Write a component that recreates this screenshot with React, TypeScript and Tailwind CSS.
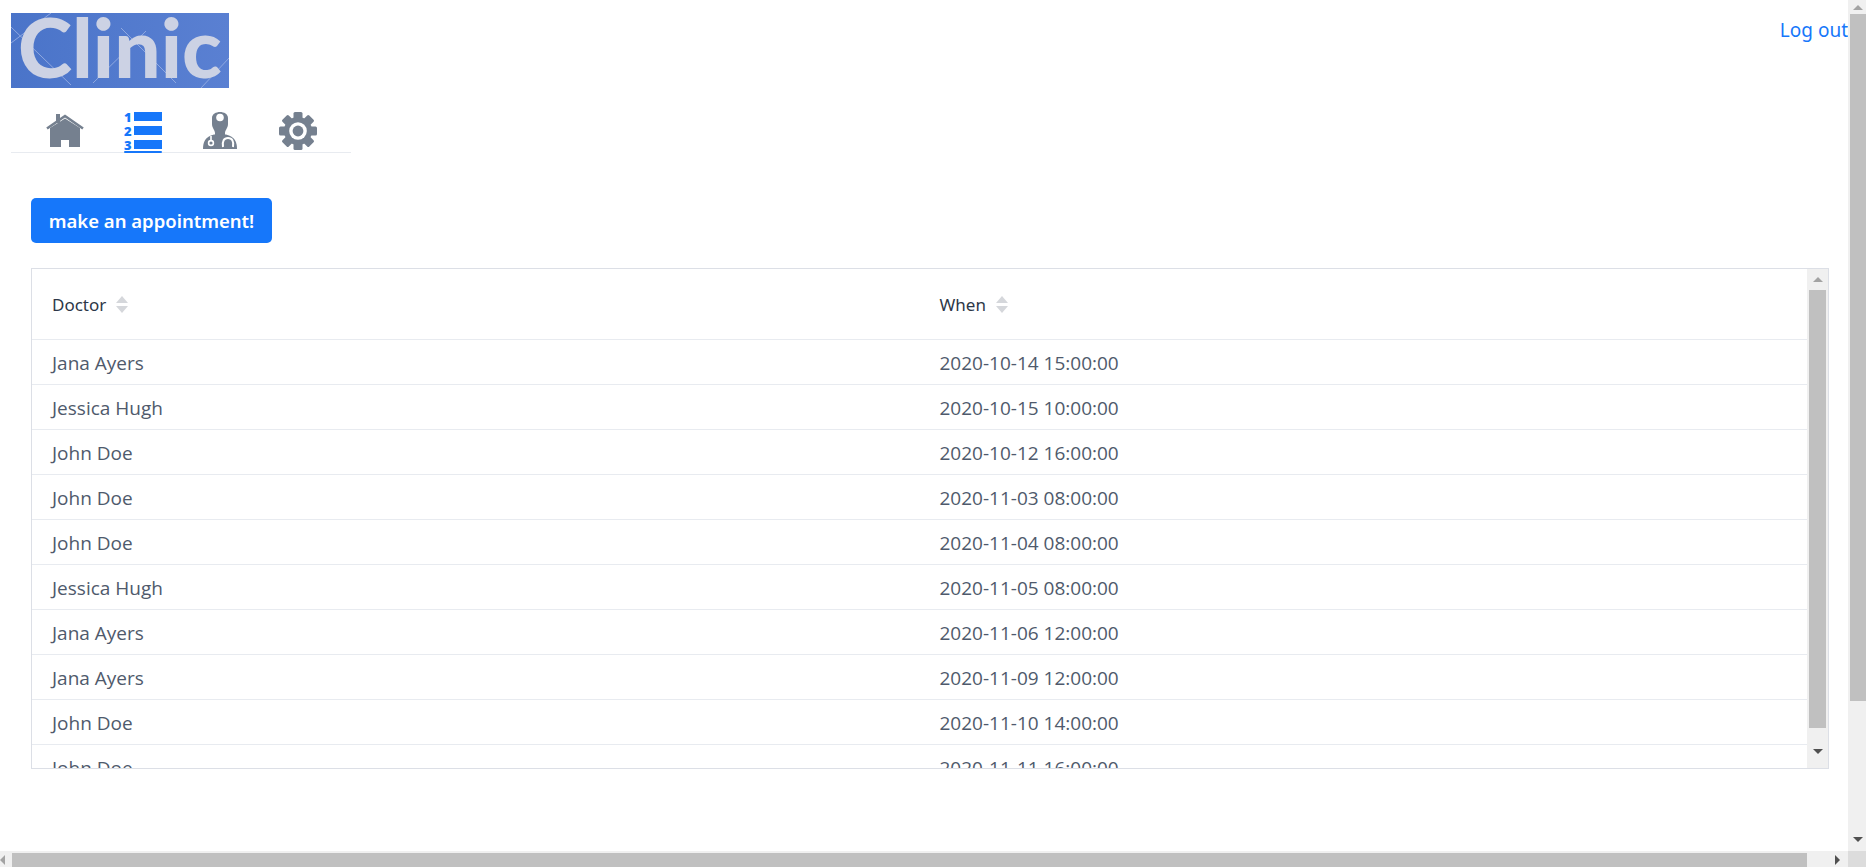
import React from 'react';

const appointments = [
  { doctor: 'Jana Ayers', when: '2020-10-14 15:00:00' },
  { doctor: 'Jessica Hugh', when: '2020-10-15 10:00:00' },
  { doctor: 'John Doe', when: '2020-10-12 16:00:00' },
  { doctor: 'John Doe', when: '2020-11-03 08:00:00' },
  { doctor: 'John Doe', when: '2020-11-04 08:00:00' },
  { doctor: 'Jessica Hugh', when: '2020-11-05 08:00:00' },
  { doctor: 'Jana Ayers', when: '2020-11-06 12:00:00' },
  { doctor: 'Jana Ayers', when: '2020-11-09 12:00:00' },
  { doctor: 'John Doe', when: '2020-11-10 14:00:00' },
  { doctor: 'John Doe', when: '2020-11-11 16:00:00' },
];

function Arrow({ dir, color }: { dir: 'up' | 'down' | 'left' | 'right'; color: string }) {
  const points = {
    up: '0,5 5,0 10,5',
    down: '0,0 10,0 5,5',
    left: '5,0 5,10 0,5',
    right: '0,0 5,5 0,10',
  }[dir];
  const vertical = dir === 'up' || dir === 'down';
  return (
    <svg width={vertical ? 10 : 5} height={vertical ? 5 : 10} viewBox={vertical ? '0 0 10 5' : '0 0 5 10'}>
      <polygon points={points} fill={color} />
    </svg>
  );
}

function HomeIcon() {
  return (
    <svg width="38" height="38" viewBox="0 0 38 38" fill="#75808f">
      <rect x="10" y="2" width="4" height="9" />
      <path d="M1 16.5 L19 4 L37 16.5" fill="none" stroke="#75808f" strokeWidth="2.6" />
      <path d="M4 16 L19 6.5 L34 16 V35 H23 V28 H15 V35 H4 Z" />
    </svg>
  );
}

function ListIcon() {
  return (
    <svg width="38" height="41" viewBox="0 0 38 41" fill="#1677fa">
      <rect x="10" y="0" width="28" height="9" />
      <rect x="10" y="14" width="28" height="9" />
      <rect x="10" y="28" width="28" height="9" />
      <rect x="0" y="39" width="38" height="2" rx="1" />
      <text x="0" y="9.5" fontFamily="'Open Sans', sans-serif" fontWeight="800" fontSize="13">1</text>
      <text x="0" y="23.5" fontFamily="'Open Sans', sans-serif" fontWeight="800" fontSize="13">2</text>
      <text x="0" y="37.5" fontFamily="'Open Sans', sans-serif" fontWeight="800" fontSize="13">3</text>
    </svg>
  );
}

function DoctorIcon() {
  return (
    <svg width="38" height="38" viewBox="0 0 38 38" fill="#75808f">
      <path d="M11 6 C11 2 15 0 19 0 C23 0 27 2 27 6 V12 C27 16 24 18 24 21 V24 H14 V21 C14 18 11 16 11 12 Z" />
      <circle cx="19" cy="5.5" r="3.8" fill="#ffffff" />
      <path d="M2 37 C2 30 4 25 13 22.5 H25 C34 25 36 30 36 37 Z" />
      <path d="M10 24 V29" stroke="#ffffff" strokeWidth="1.6" fill="none" />
      <circle cx="10" cy="31" r="2.4" fill="#75808f" stroke="#ffffff" strokeWidth="1.6" />
      <path d="M22 35 C21 29 23 26 27 26 C31 26 33 29 32 35" fill="none" stroke="#ffffff" strokeWidth="2" />
    </svg>
  );
}

function GearIcon() {
  return (
    <svg width="38" height="38" viewBox="0 0 38 38" fill="#75808f">
      {[0, 45, 90, 135].map((deg) => (
        <rect key={deg} x="14.5" y="0" width="9" height="38" rx="1.5" transform={`rotate(${deg} 19 19)`} />
      ))}
      <circle cx="19" cy="19" r="14" />
      <circle cx="19" cy="19" r="8.8" fill="#ffffff" />
      <circle cx="19" cy="19" r="5.4" />
    </svg>
  );
}

function Logo() {
  return (
    <div className="relative h-[75px] w-[218px] overflow-hidden bg-gradient-to-r from-[#4a74c9] to-[#5a80d2]">
      <svg className="absolute inset-0" width="218" height="75" viewBox="0 0 218 75" stroke="#8fa8e0" strokeWidth="1" fill="none">
        <path d="M0 14 L60 72 M40 0 L0 30 M110 15 L165 70 M135 18 L82 70 M218 45 L190 75" />
      </svg>
      <span className="absolute left-[7px] top-[-12px] font-['Lato',sans-serif] text-[82px] leading-[90px] font-black text-[#ccd2e4] blur-[0.4px]">
        Clinic
      </span>
    </div>
  );
}

function SortIcon() {
  return (
    <span className="ml-[10px] inline-flex flex-col gap-[3px]">
      <svg width="12" height="7" viewBox="0 0 12 7"><polygon points="6,0 12,7 0,7" fill="#d5d7db" /></svg>
      <svg width="12" height="7" viewBox="0 0 12 7"><polygon points="0,0 12,0 6,7" fill="#d5d7db" /></svg>
    </span>
  );
}

export default function App() {
  return (
    <div className="flex h-[867px] w-[1866px] flex-col overflow-hidden bg-white font-['Noto_Sans','Open_Sans',sans-serif]">
      <div className="flex min-h-0 flex-1">
        {/* Page */}
        <div className="min-w-0 flex-1">
          <div className="flex items-start justify-between overflow-hidden pt-[13px] pl-[11px]">
            <Logo />
            <a className="mt-[5px] text-[19px] leading-[24px] text-[#1677fa]">Log out</a>
          </div>

          <nav className="mt-[24px] ml-[11px] flex h-[41px] w-[340px] items-start gap-[39.5px] border-b border-[#e8ebf0] pl-[35px]">
            <HomeIcon />
            <ListIcon />
            <DoctorIcon />
            <GearIcon />
          </nav>

          <div className="pt-[45px] pr-[19px] pl-[31px]">
            <button className="h-[45px] w-[241px] rounded-[5px] bg-[#1677fa] text-[18.5px] font-semibold text-white">
              make an appointment!
            </button>

            <div className="mt-[25px] flex h-[501px] overflow-hidden border border-[#dcdfe6]">
              <div className="min-w-0 flex-1 overflow-hidden">
                <table className="w-full table-fixed border-collapse text-left">
                  <thead>
                    <tr className="h-[70px] border-b border-[#e8ebf0]">
                      {['Doctor', 'When'].map((label) => (
                        <th key={label} className="px-[20px] pt-[1px] text-[17px] font-normal text-[#2d3748]">
                          <span className="inline-flex items-center">
                            {label}
                            <SortIcon />
                          </span>
                        </th>
                      ))}
                    </tr>
                  </thead>
                  <tbody>
                    {appointments.map((row, i) => (
                      <tr key={i} className="h-[45px] border-b border-[#e8ebf0] font-['Open_Sans',sans-serif] text-[19px] text-[#4f5a6c]">
                        <td className="px-[20px] pt-[3px]">{row.doctor}</td>
                        <td className="px-[20px] pt-[3px]">{row.when}</td>
                      </tr>
                    ))}
                  </tbody>
                </table>
              </div>
              {/* table scrollbar */}
              <div className="flex w-[21px] flex-col items-center bg-[#f0f0f0] pb-[11px]">
                <div className="flex h-[21px] items-center justify-center"><Arrow dir="up" color="#a3a3a3" /></div>
                <div className="h-[438px] w-[17px] bg-[#c0c0c0]" />
                <div className="mt-auto flex h-[12px] items-center justify-center"><Arrow dir="down" color="#505050" /></div>
              </div>
            </div>
          </div>
        </div>

        {/* page vertical scrollbar */}
        <div className="flex w-[18px] flex-col bg-[#f0f0f0] pl-[2px]">
          <div className="flex h-[14px] items-center justify-center"><Arrow dir="up" color="#a3a3a3" /></div>
          <div className="h-[687px] bg-[#c0c0c0]" />
          <div className="mt-auto flex h-[24px] items-center justify-center"><Arrow dir="down" color="#505050" /></div>
        </div>
      </div>

      {/* page horizontal scrollbar */}
      <div className="flex h-[16px] bg-[#f0f0f0]">
        <div className="flex h-full w-[12px] items-center pt-[2px]"><Arrow dir="left" color="#a3a3a3" /></div>
        <div className="mt-[2px] h-[14px] w-[1795px] bg-[#c0c0c0]" />
        <div className="flex h-full flex-1 items-center justify-end pt-[2px] pr-[8px]"><Arrow dir="right" color="#505050" /></div>
        <div className="h-full w-[18px] bg-[#dcdcdc]" />
      </div>
    </div>
  );
}
